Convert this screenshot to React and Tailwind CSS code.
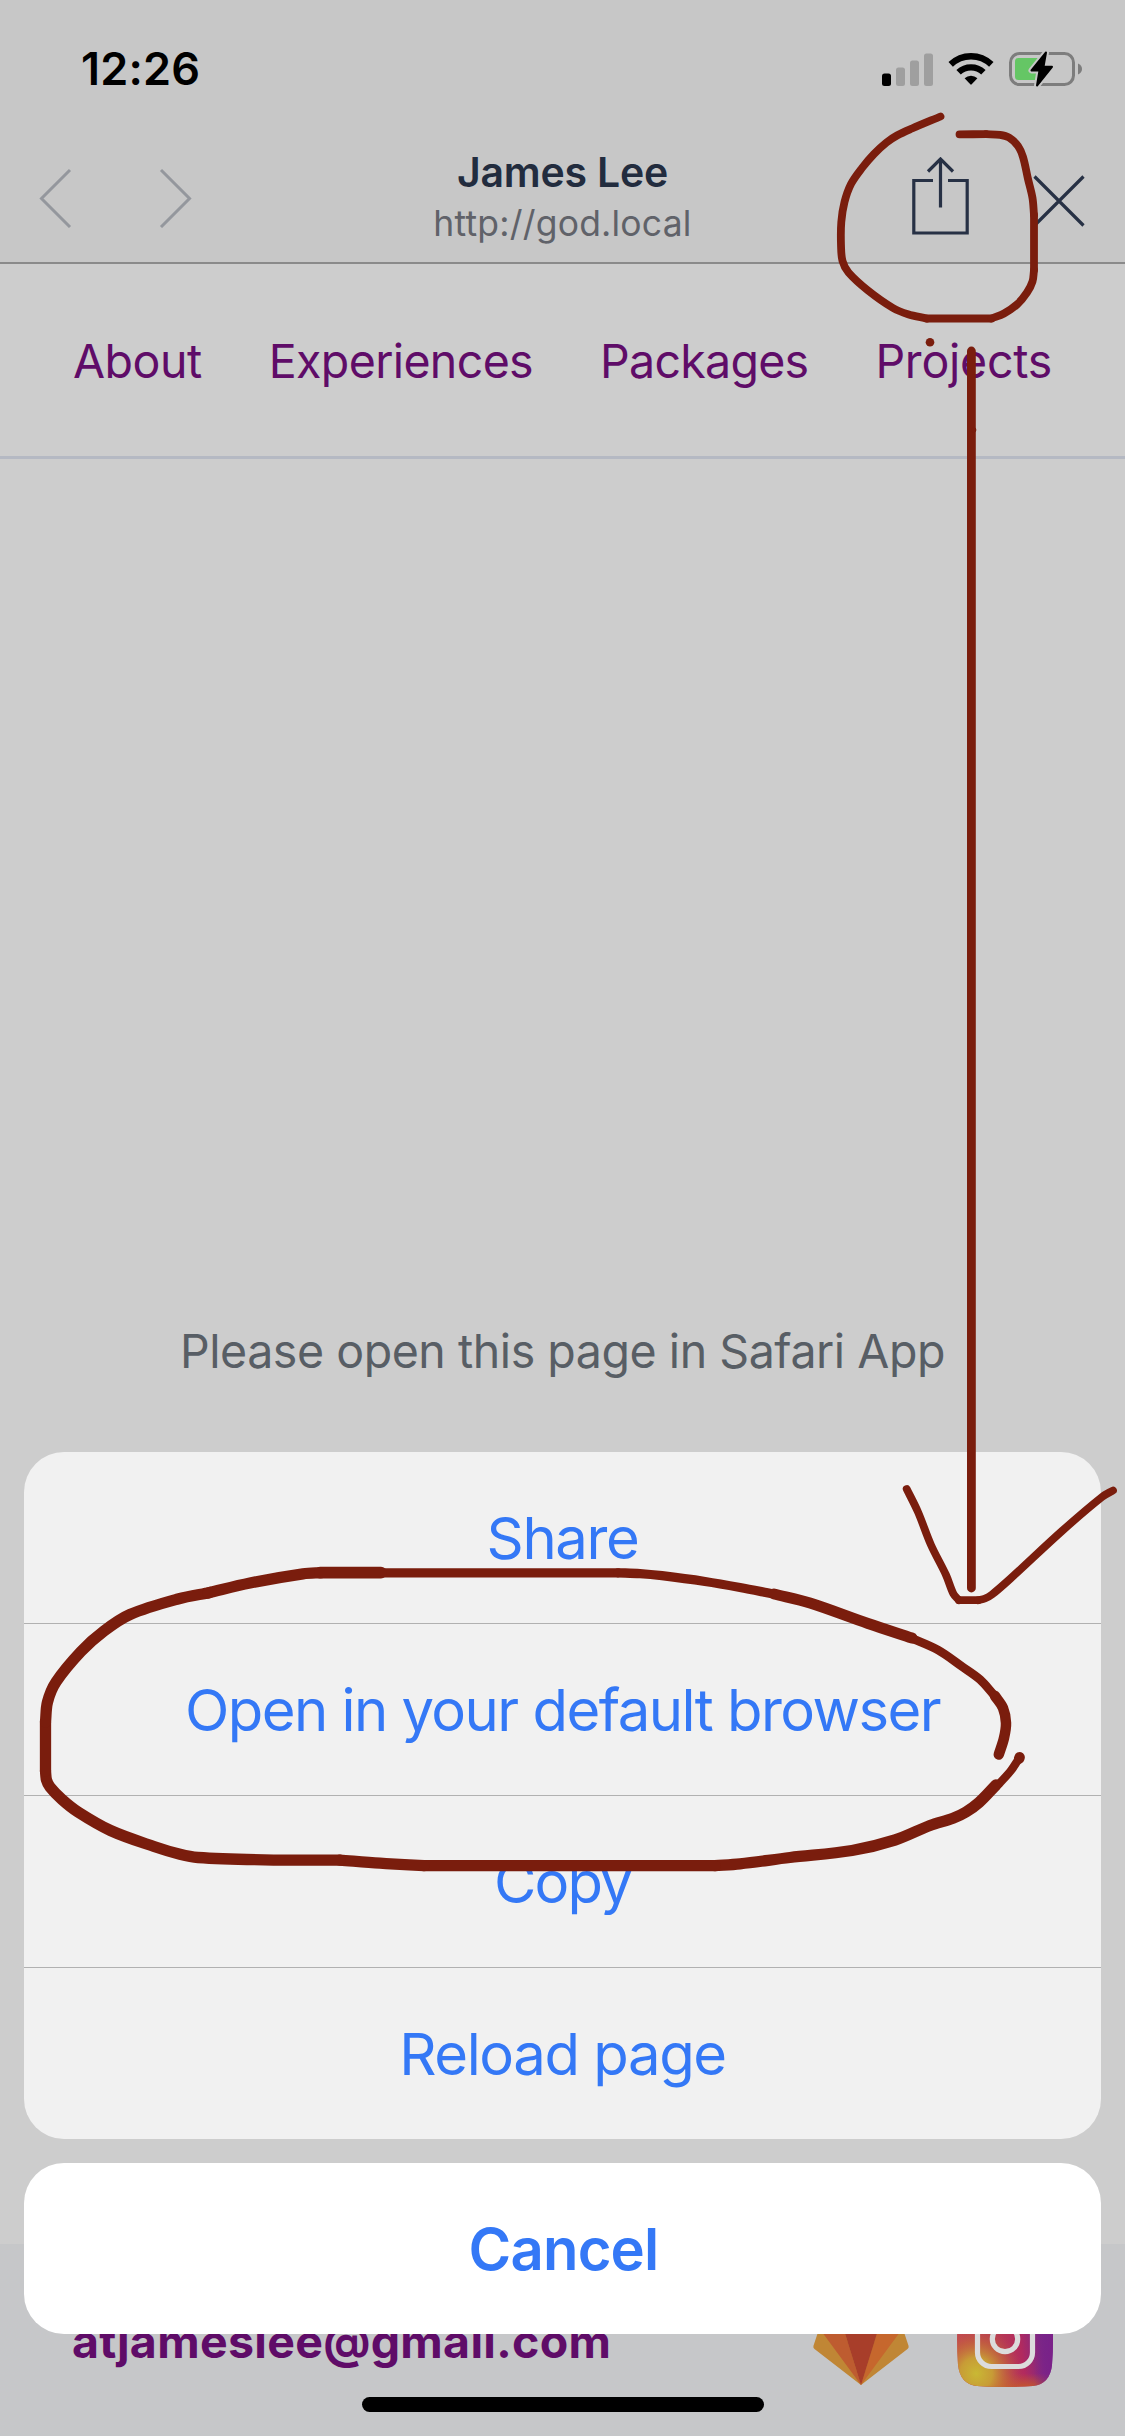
import React from "react";

const INK = "#7a1d0d";

// Smooth curve through a list of points; tangents are limited by the length of
// the segment they belong to, so long straight runs do not bulge.
function smooth(points) {
  const dist = (a, b) => Math.hypot(b[0] - a[0], b[1] - a[1]) || 1;
  const dir = (i) => {
    const a = points[Math.max(i - 1, 0)];
    const b = points[Math.min(i + 1, points.length - 1)];
    const l = dist(a, b);
    return [(b[0] - a[0]) / l, (b[1] - a[1]) / l];
  };
  let d = `M${points[0][0]} ${points[0][1]}`;
  for (let i = 0; i < points.length - 1; i++) {
    const p1 = points[i];
    const p2 = points[i + 1];
    const k = dist(p1, p2) / 3;
    const t1 = dir(i);
    const t2 = dir(i + 1);
    d += `C${p1[0] + t1[0] * k} ${p1[1] + t1[1] * k} ${p2[0] - t2[0] * k} ${p2[1] - t2[1] * k} ${p2[0]} ${p2[1]}`;
  }
  return d;
}

// Hand-drawn marker strokes: [width, points]
const strokes = [
  [7.8, [[940.5, 116.5], [912, 128.5], [897, 135.5], [886.5, 142.5], [874, 154], [862, 168], [851, 184], [844.5, 202], [841.3, 222], [841, 245], [842.5, 261], [848.5, 272.5], [868, 290.5], [893, 308], [908, 314.2], [926.5, 318.5]]],
  [7.8, [[926.5, 318.5], [991.5, 318.5]]],
  [7.8, [[991.5, 318.5], [1004, 313.5], [1017, 304.5], [1027, 292.5], [1032.5, 281.5], [1034, 270]]],
  [7.8, [[1034, 270], [1034, 215]]],
  [7.8, [[1034, 215], [1032.5, 198], [1028, 179], [1023, 157], [1018, 146], [1009, 137.5], [1000, 134.8], [986, 134.2]]],
  [7.8, [[986, 134.2], [959.5, 134.3]]],
  [8.8, [[971.4, 351], [971.4, 1588]]],
  [7.8, [[906.7, 1489], [918, 1512], [931, 1545], [946, 1575], [953.5, 1594], [959, 1600.2]]],
  [7.8, [[959, 1600.2], [978, 1600.2]]],
  [7.8, [[978, 1600.2], [985, 1598.5], [992, 1594.5], [1010, 1579], [1062, 1531], [1102, 1497], [1113, 1490.5]]],
  [9.3, [[380, 1572.8], [618, 1572.8]]],
  [9.3, [[618, 1572.8], [640, 1573.6], [662, 1575.7], [705, 1581.5], [740, 1587.5], [772, 1593.8]]],
  [11, [[774, 1594], [810, 1603], [868, 1623.5], [912, 1638]]],
  [8.8, [[910, 1637.5], [938, 1650], [962, 1666.5], [980, 1679.5], [994, 1695]]],
  [10.5, [[995, 1696], [1003, 1708], [1006, 1723], [1004, 1738], [998.8, 1754.5]]],
  [10.5, [[1019.6, 1757.3], [1019.2, 1758.5]]],
  [8.2, [[1019, 1758.5], [1011, 1770.5], [999, 1784]]],
  [11.3, [[996, 1785], [979, 1802.5], [966, 1812], [953, 1818.3], [930, 1825.5], [895, 1840], [852, 1850.5], [790, 1857.5], [740, 1863.8], [715, 1865.7]]],
  [11.3, [[715, 1865.7], [424, 1865.7]]],
  [11.3, [[424, 1865.7], [380, 1863.2], [340, 1860.2]]],
  [11.3, [[340, 1860.2], [264, 1859.8], [198, 1857.5], [180, 1854.3], [154, 1846.5], [110.5, 1830.5], [78, 1812], [62, 1799.5], [50, 1787], [46.5, 1780], [45.5, 1771]]],
  [11.3, [[45.5, 1771], [45.5, 1722]]],
  [11.3, [[45.5, 1722], [47.5, 1702], [56, 1682], [81, 1651.5], [104, 1631], [130, 1614.5], [178, 1599], [210, 1592.5]]],
  [11.3, [[208, 1593], [250, 1583], [303, 1573.8], [322, 1572.6]]],
  [11.8, [[320, 1572.6], [381, 1572.6]]],
];

function Annotations() {
  return (
    <svg className="pointer-events-none absolute inset-0" width="1125" height="2436" viewBox="0 0 1125 2436" fill="none" stroke={INK} strokeLinecap="round" strokeLinejoin="round">
      {strokes.map(([w, pts], i) => (
        <path key={i} d={smooth(pts)} strokeWidth={w} />
      ))}
      <circle cx="930" cy="342.2" r="4.3" fill={INK} stroke="none" />
      <circle cx="974" cy="430" r="2.4" fill={INK} stroke="none" />
    </svg>
  );
}

function Signal() {
  return (
    <svg width="51" height="33" viewBox="0 0 51 33">
      <rect x="0" y="20.5" width="9" height="12.5" rx="2.5" fill="#000" />
      <rect x="14" y="14.5" width="9" height="18.5" rx="2.5" fill="#9f9f9f" />
      <rect x="28" y="7.5" width="9" height="25.5" rx="2.5" fill="#9f9f9f" />
      <rect x="42" y="0.5" width="9" height="32.5" rx="2.5" fill="#9f9f9f" />
    </svg>
  );
}

function Wifi() {
  return (
    <svg width="46" height="34" viewBox="0 0 46 34" fill="none" stroke="#000" strokeWidth="6.4">
      <path d="M2.7 12.4A29.3 29.3 0 0 1 43.3 12.4" />
      <path d="M10.6 20.3A18 18 0 0 1 35.4 20.3" />
      <path d="M16.6 26.2A9.3 9.3 0 0 1 29.4 26.2L23.7 32.3Q23 33 22.3 32.3Z" fill="#000" stroke="none" />
    </svg>
  );
}

function Battery() {
  return (
    <svg className="overflow-visible" width="73" height="34" viewBox="0 0 73 34">
      <rect x="1.5" y="1.5" width="63" height="31" rx="9" fill="none" stroke="#7d7d7d" strokeWidth="3" />
      <path d="M69 11.5C71.6 12.6 73 14.8 73 17S71.6 21.4 69 22.5Z" fill="#7d7d7d" />
      <path d="M9.500 6H30V28H9.500Q6 28 6 24.500V9.500Q6 6 9.500 6Z" fill="#65c665" />
      <path d="M37 0.500L22.500 18.500H30.500L28 33.500L43 14.800H34.500Z" fill="#000" stroke="#c7c7c7" strokeWidth="6" strokeLinejoin="round" />
      <path d="M37 0.500L22.500 18.500H30.500L28 33.500L43 14.800H34.500Z" fill="#000" stroke="#000" strokeWidth="2" strokeLinejoin="round" />
    </svg>
  );
}

function Chevron({ flip }) {
  return (
    <svg width="34" height="60" viewBox="0 0 34 60" fill="none" stroke="#94979d" strokeWidth="3">
      <path d={flip ? "M2 2L30.500 30.500L2 59" : "M32 2L3.500 30.500L32 59"} />
    </svg>
  );
}

function ShareIcon() {
  return (
    <svg width="57" height="78" viewBox="0 0 57 78" fill="none" stroke="#273145" strokeWidth="3.2">
      <path d="M21 23.500H1.800V76H55.200V23.500H36" />
      <path d="M28.500 2V50.500" />
      <path d="M16 14.500L28.500 2L41 14.500" />
    </svg>
  );
}

function CloseIcon() {
  return (
    <svg width="52" height="52" viewBox="0 0 52 52" fill="none" stroke="#273145" strokeWidth="3.200">
      <path d="M1.500 1.500L50.500 50.500M50.500 1.500L1.500 50.500" />
    </svg>
  );
}

function GitLab() {
  return (
    <svg width="96" height="94" viewBox="0 0 96 94">
      <path d="M18 2L29 36H67L78 2L95.600 55Q96 57 94.500 58L48 94L1.500 58Q0 57 0.400 55Z" fill="#c08635" />
      <path d="M9 41H30V36L48 94Z" fill="#be5c30" />
      <path d="M87 41H66V36L48 94Z" fill="#c6672d" />
      <path d="M30 36H66L48 94Z" fill="#a83e2a" />
    </svg>
  );
}

const TILE = "M22 1Q48 -1 74 1Q93 2 95 22Q97 48 95 74Q93 93 76 95Q48 97 20 95Q3 93 1 74Q-1 48 1 22Q3 2 22 1Z";

function Instagram() {
  return (
    <svg width="96" height="96" viewBox="0 0 96 96">
      <defs>
        <linearGradient id="ig-base" x1="0" y1="0.6" x2="1" y2="0.450">
          <stop offset="0" stopColor="#c24a50" />
          <stop offset="0.350" stopColor="#b8424e" />
          <stop offset="0.650" stopColor="#b22a5e" />
          <stop offset="0.860" stopColor="#7c2886" />
          <stop offset="1" stopColor="#632c90" />
        </linearGradient>
        <radialGradient id="ig-glow" cx="0.200" cy="0.860" r="0.480">
          <stop offset="0" stopColor="#c9b834" />
          <stop offset="0.350" stopColor="#c8a035" stopOpacity="0.950" />
          <stop offset="0.700" stopColor="#c56a38" stopOpacity="0.550" />
          <stop offset="1" stopColor="#c04a50" stopOpacity="0" />
        </radialGradient>
        <linearGradient id="ig-foot" x1="0" y1="0.860" x2="0" y2="1">
          <stop offset="0" stopColor="#c45a2c" stopOpacity="0" />
          <stop offset="1" stopColor="#c4582c" stopOpacity="0.900" />
        </linearGradient>
        <linearGradient id="ig-side" x1="0.800" y1="0" x2="1" y2="0">
          <stop offset="0" stopColor="#7c2088" stopOpacity="0" />
          <stop offset="1" stopColor="#7c2088" />
        </linearGradient>
      </defs>
      <path d={TILE} fill="url(#ig-base)" />
      <path d={TILE} fill="url(#ig-foot)" />
      <path d={TILE} fill="url(#ig-glow)" />
      <path d={TILE} fill="url(#ig-side)" />
      <rect x="20.500" y="20.500" width="55" height="55" rx="14" fill="none" stroke="#dcdcdc" strokeWidth="5.200" />
      <circle cx="48" cy="48" r="12.700" fill="none" stroke="#dcdcdc" strokeWidth="5.200" />
      <circle cx="64" cy="32" r="3.500" fill="#dcdcdc" />
    </svg>
  );
}

export default function App() {
  return (
    <div className="relative flex h-[2436px] w-[1125px] flex-col overflow-hidden bg-[#cdcdcd] font-['Inter',sans-serif] antialiased">
      <header className="h-[264px] shrink-0 border-b-2 border-[#8a8a8a] bg-[#c7c7c7]">
        <div className="flex h-[138px] items-center justify-between pr-[43px] pl-[81px]">
          <span className="text-[45px] font-semibold tracking-[0.2px] text-black">12:26</span>
          <div className="flex items-center gap-[15px]">
            <Signal />
            <Wifi />
            <Battery />
          </div>
        </div>
        <div className="grid h-[124px] grid-cols-[1fr_auto_1fr]">
          <div className="flex gap-[87px] pt-[30px] pl-[38px]">
            <Chevron />
            <Chevron flip />
          </div>
          <div className="pt-[10px] text-center">
            <h1 className="text-[41px] leading-[48px] font-semibold tracking-[-0.22px] text-[#222c3e]">James Lee</h1>
            <p className="text-[35.5px] leading-[56px] tracking-[0.21px] text-[#606269]">http://god.local</p>
          </div>
          <div className="flex items-start justify-end gap-[64px] pt-[19px] pr-[40px]">
            <ShareIcon />
            <div className="pt-[18px]">
              <CloseIcon />
            </div>
          </div>
        </div>
      </header>

      <nav className="flex h-[195px] shrink-0 items-center gap-[67px] border-b-[3px] border-[#b5b9c3] pt-[4px] pl-[73px] text-[46.5px] whitespace-nowrap text-[#5f0c68]">
        <a className="tracking-[-0.48px]">About</a>
        <a className="tracking-[-0.63px]">Experiences</a>
        <a className="tracking-[-0.73px]">Packages</a>
        <a className="tracking-[-0.22px]">Projects</a>
      </nav>

      <main className="flex-1 pt-[862px] text-center">
        <p className="text-[46.5px] leading-[60px] tracking-[-0.45px] text-[#585e65]">Please open this page in Safari App</p>
      </main>

      <footer className="flex h-[192px] shrink-0 justify-between bg-[#c6c7c9] pt-[47px] pr-[72px] pl-[72px]">
        <span className="text-[46.5px] leading-[100px] font-bold tracking-[0.3px] text-[#5f0c68]">atjameslee@gmail.com</span>
        <div className="flex gap-[48px]">
          <GitLab />
          <Instagram />
        </div>
      </footer>

      <div className="absolute inset-x-6 top-[1452px] flex flex-col gap-6 text-center text-[58px] text-[#3478f6]">
        <ul className="divide-y divide-[#b1b1b1] rounded-[40px] bg-[#f1f1f1]">
          <li className="pt-[2px] leading-[169px] tracking-[-1.4px]">Share</li>
          <li className="pt-[2px] leading-[169px] tracking-[-1.54px]">Open in your default browser</li>
          <li className="pt-[2px] leading-[169px] tracking-[-1.8px]">Copy</li>
          <li className="pt-[2px] leading-[169px] tracking-[-1.43px]">Reload page</li>
        </ul>
        <button className="rounded-[40px] bg-white pt-[2px] pl-[2px] leading-[169px] font-semibold tracking-[-0.82px]">Cancel</button>
      </div>

      <div className="absolute top-[2397px] left-[362px] h-[15px] w-[402px] rounded-full bg-black" />

      <Annotations />
    </div>
  );
}
